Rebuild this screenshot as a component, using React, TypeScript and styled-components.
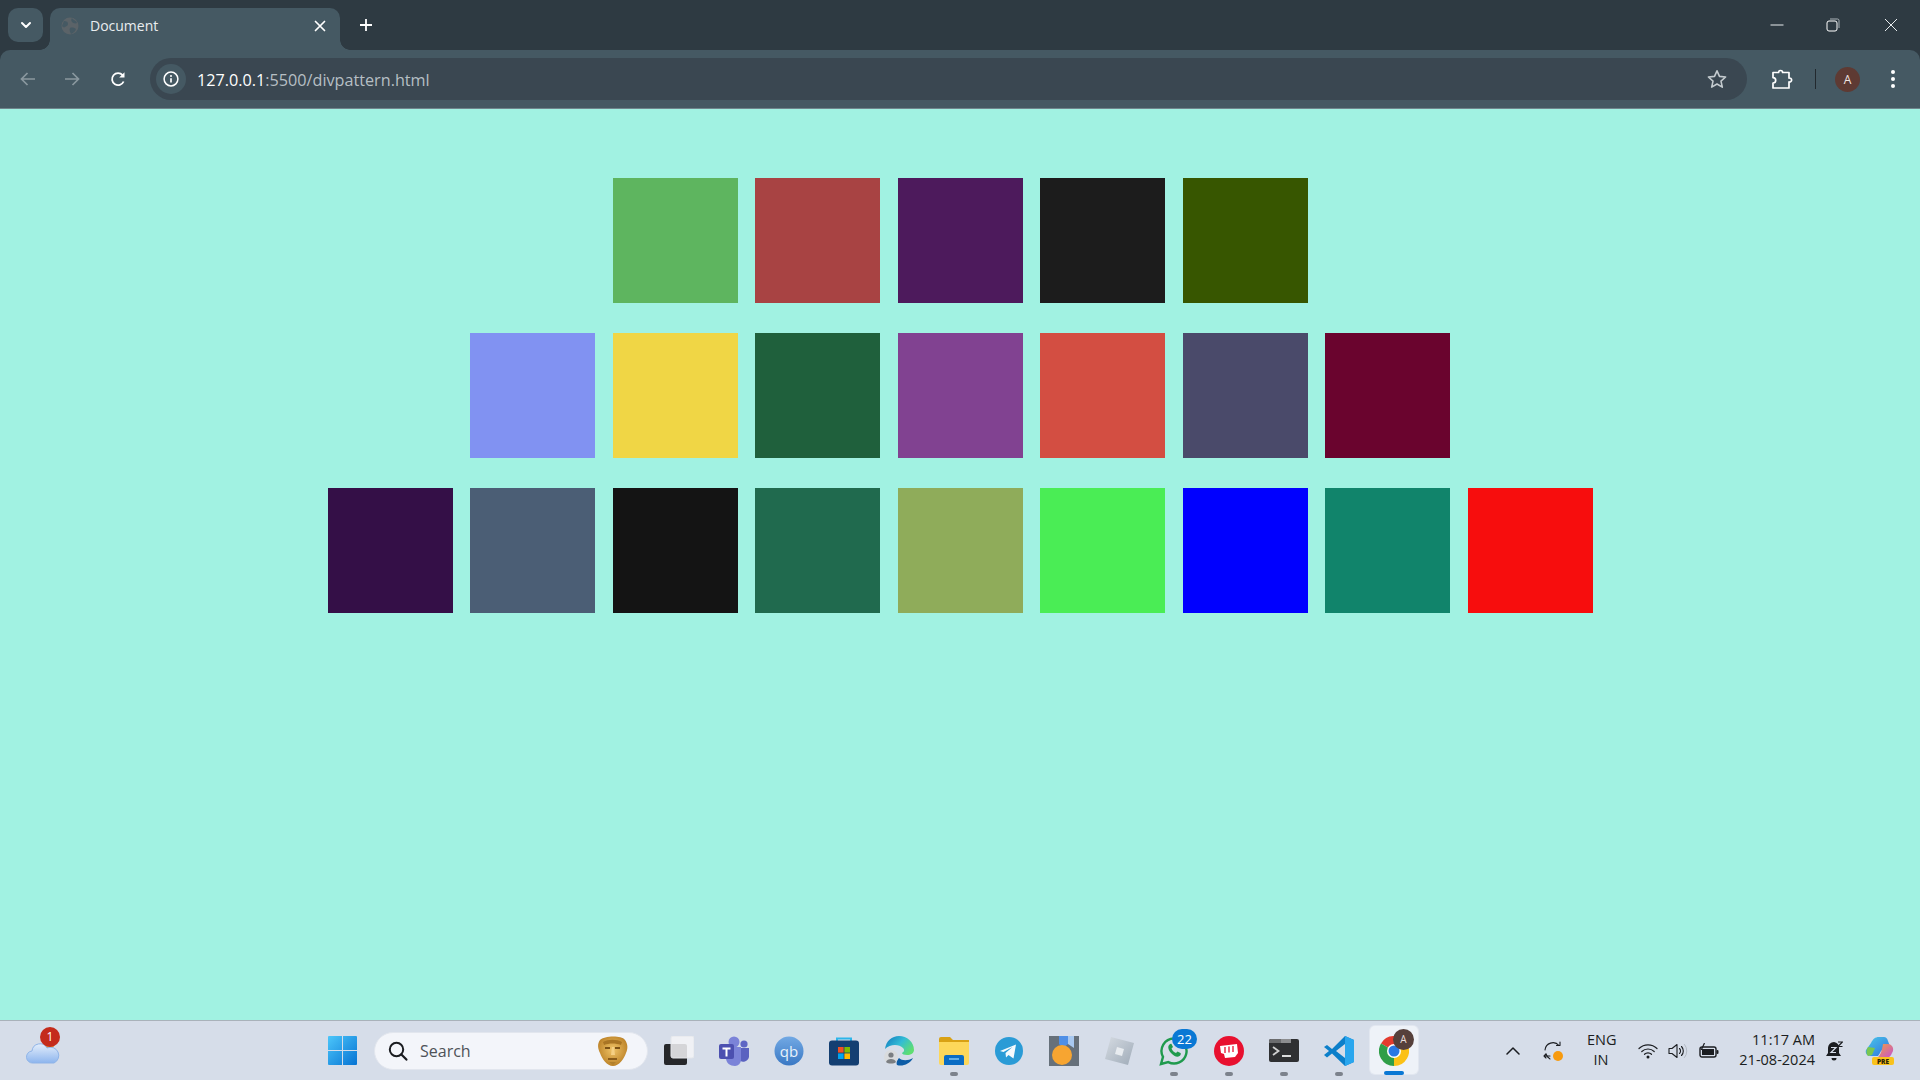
import React from "react";
import styled, { createGlobalStyle } from "styled-components";

const GlobalStyle = createGlobalStyle`
  html, body {
    margin: 0;
    padding: 0;
    height: 100%;
    overflow: hidden;
  }
  * { box-sizing: border-box; }
`;

const Screen = styled.div`
  width: 1920px;
  height: 1080px;
  display: flex;
  flex-direction: column;
  overflow: hidden;
  font-family: "Open Sans", "Noto Sans", sans-serif;
`;

/* browser chrome */
const TabStrip = styled.div`
  height: 50px;
  flex: none;
  display: flex;
  background: #2e3a42;
  padding: 8px 0 0 8px;
`;

const TabSearch = styled.div`
  width: 35px;
  height: 34px;
  border-radius: 10px;
  background: #455963;
  display: flex;
  align-items: center;
  justify-content: center;
`;

const Tab = styled.div`
  position: relative;
  width: 290px;
  height: 42px;
  margin-left: 7px;
  border-radius: 10px 10px 0 0;
  background: #455963;
  display: flex;
  align-items: center;
  padding: 0 14px 6px 11px;
  color: #e9edef;
  font-size: 14px;

  &::before,
  &::after {
    content: "";
    position: absolute;
    bottom: 0;
    width: 10px;
    height: 10px;
  }
  &::before {
    left: -10px;
    background: radial-gradient(circle at 0 0, transparent 9.5px, #455963 10px);
  }
  &::after {
    right: -10px;
    background: radial-gradient(circle at 100% 0, transparent 9.5px, #455963 10px);
  }
`;

const TabTitle = styled.span`
  margin-left: 11px;
  flex: 1;
  line-height: 20px;
`;

const NewTab = styled.div`
  width: 20px;
  height: 34px;
  margin-left: 16px;
  display: flex;
  align-items: center;
  justify-content: center;
`;

const WindowControls = styled.div`
  margin-left: auto;
  display: flex;
  height: 34px;
  align-items: center;
  padding-right: 22px;
`;

const WindowButton = styled.div<{ $gap: number }>`
  margin-left: ${(p) => p.$gap}px;
  display: flex;
`;

const Toolbar = styled.div`
  height: 59px;
  flex: none;
  display: flex;
  align-items: center;
  background: #2e3a42;
`;

const ToolbarInner = styled.div`
  flex: 1;
  height: 59px;
  background: #455963;
  border-radius: 10px 10px 0 0;
  border-bottom: 1px solid #6f858c;
  display: flex;
  align-items: center;
  padding-left: 18px;
`;

const NavButton = styled.div<{ $gap: number }>`
  margin-left: ${(p) => p.$gap}px;
  width: 20px;
  height: 20px;
  display: flex;
`;

const Omnibox = styled.div`
  width: 1597px;
  height: 42px;
  margin-left: 22px;
  border-radius: 21px;
  background: #3a4751;
  display: flex;
  align-items: center;
  padding: 0 20px 0 6px;
`;

const InfoChip = styled.div`
  width: 30px;
  height: 30px;
  border-radius: 50%;
  background: #455963;
  display: flex;
  align-items: center;
  justify-content: center;
`;

const Url = styled.div`
  margin-left: 11px;
  padding-top: 1px;
  flex: 1;
  font-size: 16.2px;
  color: #b6bfc4;
`;

const UrlHost = styled.span`
  color: #ffffff;
`;

const ToolbarIcon = styled.div<{ $gap: number }>`
  margin-left: ${(p) => p.$gap}px;
  display: flex;
`;

const ToolbarDivider = styled.div`
  width: 1px;
  height: 20px;
  margin-left: 22px;
  background: #22292e;
`;

const Avatar = styled.div`
  width: 25px;
  height: 25px;
  margin-left: 19px;
  border-radius: 50%;
  background: #5e3a33;
  color: #f2e6e2;
  font-size: 12px;
  display: flex;
  align-items: center;
  justify-content: center;
`;

/* page content */
const Page = styled.main`
  flex: 1;
  background: #a1f2e2;
  display: flex;
  flex-direction: column;
  align-items: center;
  gap: 30px;
  padding: 69px 0 0 0.5px;
`;

const Row = styled.div`
  display: flex;
  gap: 17.5px;
`;

const Square = styled.div<{ $color: string }>`
  width: 125px;
  height: 125px;
  background: ${(p) => p.$color};
`;

/* windows taskbar */
const Taskbar = styled.footer`
  height: 60px;
  flex: none;
  display: flex;
  align-items: center;
  background: #d6dde9;
  border-top: 1px solid #a9b2ba;
`;

const Weather = styled.div`
  position: relative;
  width: 34px;
  height: 30px;
  margin-left: 26px;
  display: flex;
  align-items: flex-end;
`;

const CountBadge = styled.span<{ $bg: string; $w: number }>`
  position: absolute;
  min-width: ${(p) => p.$w}px;
  height: 20px;
  border-radius: 10px;
  background: ${(p) => p.$bg};
  color: #fff;
  font-size: 12px;
  line-height: 20px;
  text-align: center;
`;

const WeatherBadge = styled(CountBadge)`
  top: -9px;
  left: 14px;
`;

const TaskCenter = styled.div`
  display: flex;
  align-items: center;
  height: 59px;
  margin-left: 255px;
`;

const Slot = styled.div`
  position: relative;
  width: 55px;
  height: 59px;
  flex: none;
  display: flex;
  align-items: center;
  justify-content: center;
`;

const ActiveBox = styled.div`
  position: absolute;
  left: 3.5px;
  top: 5px;
  width: 48px;
  height: 48px;
  border-radius: 5px;
  background: #eef2f8;
  box-shadow: 0 0 0 1px #e2e7f0;
`;

const IconLayer = styled.div`
  position: relative;
  display: flex;
`;

const RunDot = styled.span<{ $active?: boolean }>`
  position: absolute;
  left: 50%;
  bottom: ${(p) => (p.$active ? 5 : 4)}px;
  width: ${(p) => (p.$active ? 20 : 8)}px;
  height: 4px;
  margin-left: ${(p) => (p.$active ? -10 : -4)}px;
  border-radius: 2px;
  background: ${(p) => (p.$active ? "#0a78d4" : "#7c828c")};
`;

const WhatsAppBadge = styled(CountBadge)`
  top: 8px;
  left: 26px;
  background: #0a78d4;
  font-size: 13px;
`;

const ChromeAvatar = styled.span`
  position: absolute;
  top: 8px;
  left: 27px;
  width: 21px;
  height: 21px;
  border-radius: 50%;
  background: #56403b;
  color: #e8dedb;
  font-size: 10px;
  line-height: 21px;
  text-align: center;
`;

const SearchBox = styled.div`
  width: 274px;
  height: 38px;
  margin: 0 3px 0 4px;
  flex: none;
  border-radius: 19px;
  background: #f3f5fa;
  border: 1px solid #e2e6ee;
  display: flex;
  align-items: center;
  padding: 0 19px 0 13px;
`;

const SearchText = styled.span`
  margin-left: 12px;
  flex: 1;
  font-size: 16px;
  color: #4e5258;
`;

const Tray = styled.div`
  margin-left: auto;
  display: flex;
  align-items: center;
  padding-right: 26px;
  color: #1b1d21;
`;

const TrayIcon = styled.div<{ $gap: number }>`
  margin-left: ${(p) => p.$gap}px;
  display: flex;
`;

const Lang = styled.div`
  margin-left: 24px;
  padding-bottom: 2px;
  width: 28px;
  font-size: 14.5px;
  line-height: 20px;
  text-align: center;
`;

const Clock = styled.div`
  margin-left: 20px;
  padding-bottom: 2px;
  width: 76px;
  font-size: 14.5px;
  line-height: 20px;
  text-align: right;
  white-space: nowrap;
`;

const rows = [
  ["#5eb55f", "#a84343", "#4d1a5c", "#1c1c1c", "#375600"],
  ["#8192f2", "#f0d645", "#1f603c", "#814291", "#d34e42", "#4a4a6a", "#6a042e"],
  [
    "#340f47",
    "#4b5e75",
    "#141414",
    "#206a4e",
    "#8fac5a",
    "#4aed55",
    "#0000ff",
    "#11846b",
    "#f70d0d",
  ],
];

const line = { fill: "none", strokeLinecap: "round", strokeLinejoin: "round" } as const;

const Chevron = () => (
  <svg width="14" height="14" viewBox="0 0 14 14">
    <path d="M3 5l4 4 4-4" {...line} stroke="#fff" strokeWidth="2" />
  </svg>
);

const Globe = () => (
  <svg width="18" height="18" viewBox="0 0 18 18">
    <circle cx="9" cy="9" r="8.5" fill="#5b6368" />
    <path d="M3 4c3 0 4 1 4 3s-2 2-3 3-2 0-3-1zM11 1c1 2 4 2 5 5-2 1-4 0-5-1s-1-3 0-4zM9 11c2-1 5 0 6 1-1 3-3 4-5 5-1-2-2-4-1-6z" fill="#455963" />
  </svg>
);

const Close = () => (
  <svg width="12" height="12" viewBox="0 0 12 12">
    <path d="M1.5 1.5l9 9M10.5 1.5l-9 9" {...line} stroke="#fff" strokeWidth="1.7" />
  </svg>
);

const Plus = () => (
  <svg width="14" height="14" viewBox="0 0 14 14">
    <path d="M7 1v12M1 7h12" stroke="#fff" strokeWidth="1.8" fill="none" />
  </svg>
);

const Minimize = () => (
  <svg width="14" height="14" viewBox="0 0 14 14">
    <path d="M0.5 7h13" stroke="#e8ecee" strokeWidth="1" />
  </svg>
);

const Restore = () => (
  <svg width="14" height="14" viewBox="0 0 14 14">
    <rect x="1" y="3" width="10" height="10" rx="2" fill="none" stroke="#fff" strokeWidth="1" />
    <path d="M4 1h7.5a1.5 1.5 0 0 1 1.5 1.5V10" fill="none" stroke="#aab3b8" strokeWidth="1" />
  </svg>
);

const WinClose = () => (
  <svg width="14" height="14" viewBox="0 0 14 14">
    <path d="M1 1l12 12M13 1L1 13" stroke="#e8ecee" strokeWidth="1" />
  </svg>
);

const Arrow = ({ flip }: { flip?: boolean }) => (
  <svg width="20" height="20" viewBox="0 0 20 20">
    <path
      d={flip ? "M3 10h13M10.5 4l6 6-6 6" : "M17 10H4M9.5 4l-6 6 6 6"}
      fill="none"
      stroke="#8a989f"
      strokeWidth="1.7"
    />
  </svg>
);

const Reload = () => (
  <svg width="20" height="20" viewBox="0 0 20 20">
    <path d="M15.6 12.5A6 6 0 1 1 14.6 6.2" fill="none" stroke="#fff" strokeWidth="1.8" />
    <path d="M16.5 3.2v5.3h-5.3z" fill="#fff" />
  </svg>
);

const Info = () => (
  <svg width="16" height="16" viewBox="0 0 16 16">
    <circle cx="8" cy="8" r="6.9" fill="none" stroke="#fff" strokeWidth="1.5" />
    <path d="M8 7.2v4.3" stroke="#fff" strokeWidth="1.7" />
    <circle cx="8" cy="4.9" r="1" fill="#fff" />
  </svg>
);

const Star = () => (
  <svg width="20" height="20" viewBox="0 0 20 20">
    <path
      d="M10 1.8l2.5 5.6 6.1.6-4.6 4.1 1.3 6L10 15l-5.3 3.1 1.3-6L1.4 8l6.1-.6z"
      fill="none"
      stroke="#c4cbcf"
      strokeWidth="1.6"
      strokeLinejoin="round"
    />
  </svg>
);

const Puzzle = () => (
  <svg width="22" height="22" viewBox="0 0 22 22">
    <path
      d="M2 4.5h5.6a2 2 0 1 1 4 0H18v5.6a2 2 0 1 1 0 3.8V20H2v-5a2.6 2.6 0 0 0 0-5.400z"
      fill="none"
      stroke="#fff"
      strokeWidth="1.7"
      strokeLinejoin="round"
    />
  </svg>
);

const Dots = () => (
  <svg width="6" height="20" viewBox="0 0 6 20">
    <circle cx="3" cy="3" r="2" fill="#fff" />
    <circle cx="3" cy="10" r="2" fill="#fff" />
    <circle cx="3" cy="17" r="2" fill="#fff" />
  </svg>
);

const Cloud = () => (
  <svg width="34" height="30" viewBox="0 0 34 30">
    <defs>
      <linearGradient id="cl" x1="0" y1="0" x2="0" y2="1">
        <stop offset="0" stopColor="#e4eefb" />
        <stop offset="1" stopColor="#8db5ee" />
      </linearGradient>
    </defs>
    <circle cx="23" cy="9" r="5" fill="#f08a24" />
    <path
      d="M7 27a6 6 0 0 1-1-12 8 8 0 0 1 15-3 7.500 7.500 0 0 1 7 15z"
      fill="url(#cl)"
      stroke="#8fb4e8"
      strokeWidth="1"
    />
  </svg>
);

const StartLogo = () => (
  <svg width="29" height="29" viewBox="0 0 29 29">
    <defs>
      <linearGradient id="win" x1="0" y1="0" x2="1" y2="1">
        <stop offset="0" stopColor="#4cc6fa" />
        <stop offset="1" stopColor="#0673d3" />
      </linearGradient>
    </defs>
    <path d="M1 0h13v14H0V1a1 1 0 0 1 1-1zM15 0h13a1 1 0 0 1 1 1v13H15zM0 15h14v14H1a1 1 0 0 1-1-1zM15 15h14v13a1 1 0 0 1-1 1H15z" fill="url(#win)" />
  </svg>
);

const SearchGlass = () => (
  <svg width="20" height="20" viewBox="0 0 20 20">
    <circle cx="8.5" cy="8.5" r="6.7" fill="none" stroke="#1a1c20" strokeWidth="2" />
    <path d="M13.4 13.4l5 5.2" stroke="#1a1c20" strokeWidth="2.2" strokeLinecap="round" />
  </svg>
);

const GoldMask = () => (
  <svg width="31" height="32" viewBox="0 0 31 32">
    <defs>
      <radialGradient id="gold" cx="0.5" cy="0.45" r="0.6">
        <stop offset="0" stopColor="#f0c468" />
        <stop offset="1" stopColor="#b77c22" />
      </radialGradient>
    </defs>
    <path d="M3 5c4-4 21-5 25 0 3 4 3 9 1 13-2 6-7 13-13 13S5 24 3 18C1 14 0 9 3 5z" fill="url(#gold)" />
    <path d="M6 7c5-3 14-3 19 0l-1 3c-5-2-12-2-17 0z" fill="#a97524" />
    <path d="M8 12h5v2H8zM18 12h5v2h-5z" fill="#7c5216" />
    <path d="M15 12h2l1 8h-4z" fill="#f5d084" />
    <path d="M11 23h9v2h-9z" fill="#8a5c1a" />
    <path d="M12 27h7l-3 3z" fill="#b07f2c" />
  </svg>
);

const TaskView = () => (
  <svg width="30" height="29" viewBox="0 0 30 29">
    <rect x="0" y="8" width="23" height="21" rx="2" fill="#26272a" />
    <rect x="7" y="0" width="23" height="22" rx="2" fill="#f4f5f7" fillOpacity="0.85" stroke="#e4e6ea" />
  </svg>
);

const Teams = () => (
  <svg width="30" height="30" viewBox="0 0 30 30">
    <circle cx="15" cy="6" r="5.500" fill="#7b83d8" />
    <circle cx="25" cy="8" r="3.600" fill="#5e66c4" />
    <path d="M20 12h10v9a6 6 0 0 1-10 3z" fill="#5a62c0" />
    <path d="M7 11h15v13a6 6 0 0 1-6 6c-5 0-9-3-9-8z" fill="#7b83d8" />
    <rect x="0" y="8" width="15" height="15" rx="2" fill="#4c50b0" />
    <path d="M3.500 11.500h8v2h-3v7h-2v-7h-3z" fill="#fff" />
  </svg>
);

const QBittorrent = () => (
  <svg width="30" height="30" viewBox="0 0 30 30">
    <defs>
      <linearGradient id="qb" x1="0" y1="0" x2="0" y2="1">
        <stop offset="0" stopColor="#72a9e4" />
        <stop offset="1" stopColor="#3a78c4" />
      </linearGradient>
    </defs>
    <circle cx="15" cy="15" r="14.500" fill="url(#qb)" />
    <text x="15" y="20.500" textAnchor="middle" fontFamily="Open Sans, sans-serif" fontSize="15" fill="#e8f2fc">
      qb
    </text>
  </svg>
);

const Store = () => (
  <svg width="30" height="30" viewBox="0 0 30 30">
    <path d="M8 6V2.500h14V6" fill="none" stroke="#2cb5ea" strokeWidth="2" />
    <rect x="0" y="4.500" width="30" height="25" rx="3" fill="#143f72" />
    <rect x="9" y="11" width="5.600" height="5.600" fill="#f25022" />
    <rect x="15.400" y="11" width="5.600" height="5.600" fill="#7fba00" />
    <rect x="9" y="17.400" width="5.600" height="5.600" fill="#00a4ef" />
    <rect x="15.400" y="17.400" width="5.600" height="5.600" fill="#ffb900" />
  </svg>
);

const Edge = () => (
  <svg width="30" height="30" viewBox="0 0 30 30">
    <defs>
      <linearGradient id="edge" x1="0" y1="0" x2="1" y2="0.6">
        <stop offset="0" stopColor="#0f76bd" />
        <stop offset="0.55" stopColor="#32bcd6" />
        <stop offset="1" stopColor="#5fde72" />
      </linearGradient>
    </defs>
    <path d="M1 13C2 5 8 0 15 0c8 0 15 6 15 14 0 3-3 5-7 5-3 0-5-1-5-2 2-1 3-3 1-5-4-4-13-4-18 1z" fill="url(#edge)" />
    <path d="M13 29c5 2 13-1 16-7-5 3-11 3-14 0-2 2-3 5-2 7z" fill="#0d5ca6" />
    <circle cx="7" cy="21" r="7" fill="#d9dbdd" />
    <circle cx="7" cy="19" r="2.600" fill="#7b7e82" />
    <path d="M2 26c1-4 9-4 10 0-2 2-8 2-10 0z" fill="#7b7e82" />
  </svg>
);

const Folder = () => (
  <svg width="30" height="30" viewBox="0 0 30 30">
    <path d="M0 3a2 2 0 0 1 2-2h9l3 3h16v6H0z" fill="#d9a114" />
    <path d="M0 6h30v21a2 2 0 0 1-2 2H2a2 2 0 0 1-2-2z" fill="#fdd75a" />
    <path d="M5 21a2 2 0 0 1 2-2h16a2 2 0 0 1 2 2v8H5z" fill="#0a6cc4" />
    <path d="M10 23h10" stroke="#7fc4f5" strokeWidth="1.500" />
  </svg>
);

const Telegram = () => (
  <svg width="28" height="28" viewBox="0 0 28 28">
    <circle cx="14" cy="14" r="14" fill="#2a9bd6" />
    <path d="M5 14l16-6.500-2.500 14-5-3.500-2.500 2.500-.5-4.500 7-6-9 5z" fill="#f4fafd" />
  </svg>
);

const PaintApp = () => (
  <svg width="30" height="30" viewBox="0 0 30 30">
    <path d="M0 0h30v30H0z" fill="#66707a" />
    <path d="M10 0h9v8l-5 4-4-4z" fill="#4f8fe6" />
    <path d="M19 0h6v12l-6-4z" fill="#a8c8f0" />
    <circle cx="13" cy="19" r="10" fill="#f7a531" />
  </svg>
);

const Roblox = () => (
  <svg width="30" height="30" viewBox="0 0 30 30">
    <defs>
      <linearGradient id="rb" x1="0" y1="0" x2="1" y2="1">
        <stop offset="0" stopColor="#d5dbe2" />
        <stop offset="1" stopColor="#9fabb8" />
      </linearGradient>
    </defs>
    <path d="M7 1l23 6-6 22-23-6z" fill="url(#rb)" />
    <path d="M13 11l7 2-2 7-7-2z" fill="#e8ecf0" />
  </svg>
);

const WhatsApp = () => (
  <svg width="30" height="30" viewBox="0 0 30 30">
    <path
      d="M15 2.500a12.500 12.500 0 0 0-11 18.400L2 28l7.300-1.900A12.500 12.500 0 1 0 15 2.500z"
      fill="none"
      stroke="#1f9a4d"
      strokeWidth="2.400"
    />
    <path
      d="M10.500 8.500c-2 1.500-1.500 5 1.500 8.500s6.500 4.500 8.500 3c1.500-1 1.500-2.500 1-3l-3-1.500-1.500 1.500c-2-.5-4-3-4.500-4.500l1.500-1.500-1.500-3c-.5-.5-1-.5-2 .5z"
      fill="#1f9a4d"
    />
  </svg>
);

const Riot = () => (
  <svg width="30" height="30" viewBox="0 0 30 30">
    <circle cx="15" cy="15" r="15" fill="#e8102f" />
    <path d="M6 10l17-2 1 9-3 4-10 1-1-4-3-1z" fill="#fff" />
    <path d="M11 11v6M15 10.500v6M19 10v6" stroke="#e8102f" strokeWidth="1.300" />
  </svg>
);

const Terminal = () => (
  <svg width="30" height="23" viewBox="0 0 30 23">
    <rect width="30" height="23" rx="2" fill="#2f3032" />
    <path d="M0 2a2 2 0 0 1 2-2h10v4H0z" fill="#6b6c6e" />
    <path d="M12 0h10v4H12z" fill="#8c8d8f" />
    <path d="M4 8l5.500 4L4 16" fill="none" stroke="#d0d0d0" strokeWidth="1.800" />
    <path d="M13 17h9" stroke="#f0f0f0" strokeWidth="1.800" />
  </svg>
);

const VSCode = () => (
  <svg width="30" height="30" viewBox="0 0 30 30">
    <path d="M21 0l9 4v22l-9 4-13-12.500-5 4L0 19l5-4-5-4 3-2 5 4z" fill="#0c7fca" />
    <path d="M21 0l9 4v22l-9 4z" fill="#29a6ee" />
    <path d="M21 8v14l-9-7z" fill="#d6dde9" />
  </svg>
);

const Chrome = () => (
  <svg width="30" height="30" viewBox="0 0 30 30">
    <path d="M15 15L2 7.500A15 15 0 0 1 28 7.500z" fill="#e33b2e" />
    <path d="M15 15L2 7.500A15 15 0 0 0 15 30z" fill="#2f9e48" />
    <path d="M15 15l13-7.500A15 15 0 0 1 15 30z" fill="#fbc116" />
    <circle cx="15" cy="15" r="7" fill="#fff" />
    <circle cx="15" cy="15" r="5.500" fill="#2a78e4" />
  </svg>
);

const TrayChevron = () => (
  <svg width="14" height="14" viewBox="0 0 14 14">
    <path d="M1 10l6-6 6 6" {...line} stroke="#1b1d21" strokeWidth="1.500" />
  </svg>
);

const SyncIcon = () => (
  <svg width="20" height="20" viewBox="0 0 20 20">
    <path d="M2 9a8 8 0 0 1 14-4.500M17 4V1M17 4.500h-3.500M3 13a8 8 0 0 0 4 5" {...line} stroke="#1b1d21" strokeWidth="1.100" />
    <path d="M1 15h6M1 15l2-2M1 15l2 2" {...line} stroke="#1b1d21" strokeWidth="1.100" />
    <circle cx="15" cy="15" r="5" fill="#f79a0e" />
  </svg>
);

const Wifi = () => (
  <svg width="20" height="16" viewBox="0 0 20 16">
    <path d="M1 5.500a13 13 0 0 1 18 0M3.800 8.500a9 9 0 0 1 12.400 0M6.500 11.300a5 5 0 0 1 7 0" {...line} stroke="#1b1d21" strokeWidth="1.200" />
    <circle cx="10" cy="14" r="1.500" fill="#1b1d21" />
  </svg>
);

const Speaker = () => (
  <svg width="20" height="16" viewBox="0 0 20 16">
    <path d="M1 5.500h3L9 1.500v13l-5-4H1z" {...line} stroke="#1b1d21" strokeWidth="1.100" />
    <path d="M11.500 5.500a3.500 3.500 0 0 1 0 5M13.500 3.500a6.500 6.500 0 0 1 0 9" {...line} stroke="#1b1d21" strokeWidth="1.100" />
    <path d="M16.500 1.500a10 10 0 0 1 0 13" {...line} stroke="#b4bac4" strokeWidth="1" />
  </svg>
);

const Battery = () => (
  <svg width="20" height="16" viewBox="0 0 20 16">
    <rect x="1" y="4" width="16" height="10" rx="2" fill="none" stroke="#1b1d21" strokeWidth="1.400" />
    <rect x="3" y="6" width="12" height="6" fill="#1b1d21" />
    <rect x="17.500" y="7" width="2" height="4" rx="1" fill="#1b1d21" />
    <path d="M5.500 0L2.500 6.500h3L3.500 11" fill="none" stroke="#1b1d21" strokeWidth="1.200" />
  </svg>
);

const BellSnooze = () => (
  <svg width="17" height="20" viewBox="0 0 17 20">
    <path d="M8 1a6 6 0 0 0-6 6v5l-2 3h15l-2-3V7a6 6 0 0 0-5-6z" fill="#1b1d21" />
    <path d="M5.500 17h5a2.500 2.500 0 0 1-5 0z" fill="#1b1d21" />
    <path d="M5 6.500h5l-5 5h5" fill="none" stroke="#d6dde9" strokeWidth="1.200" />
    <path d="M12 1h4.500L12 5.500h4.500" fill="none" stroke="#1b1d21" strokeWidth="1.200" />
  </svg>
);

const Copilot = () => (
  <svg width="29" height="28" viewBox="0 0 29 28">
    <defs>
      <linearGradient id="cpa" x1="0" y1="0" x2="1" y2="1">
        <stop offset="0" stopColor="#4ac9e8" />
        <stop offset="1" stopColor="#2f6fe0" />
      </linearGradient>
      <linearGradient id="cpb" x1="0" y1="0" x2="1" y2="1">
        <stop offset="0" stopColor="#f2a03c" />
        <stop offset="1" stopColor="#c34fd8" />
      </linearGradient>
    </defs>
    <path d="M6 6c2-4 4-6 8-6h5c2 0 3 1 4 4l3 8c-6-1-10 0-11 4l-2 3H6c-4 0-6-3-5-6z" fill="url(#cpa)" />
    <path d="M3 10l7 1-3 7-4 1c-2-2-2-6 0-9z" fill="#7ac74f" />
    <path d="M18 7h5c3 0 6 3 5 7l-2 4c-1 2-3 3-5 3h-9c3-2 5-7 6-14z" fill="url(#cpb)" />
    <rect x="7" y="20" width="22" height="8" rx="2" fill="#f9c21c" />
    <text x="18" y="26.500" textAnchor="middle" fontFamily="Open Sans, sans-serif" fontWeight="800" fontSize="6.500" fill="#2a2205">
      PRE
    </text>
  </svg>
);

const apps = [
  { icon: <TaskView /> },
  { icon: <Teams /> },
  { icon: <QBittorrent /> },
  { icon: <Store /> },
  { icon: <Edge /> },
  { icon: <Folder />, running: true },
  { icon: <Telegram /> },
  { icon: <PaintApp /> },
  { icon: <Roblox /> },
];

export default function App() {
  return (
    <>
      <GlobalStyle />
      <Screen>
        <TabStrip>
          <TabSearch>
            <Chevron />
          </TabSearch>
          <Tab>
            <Globe />
            <TabTitle>Document</TabTitle>
            <Close />
          </Tab>
          <NewTab>
            <Plus />
          </NewTab>
          <WindowControls>
            <WindowButton $gap={0}>
              <Minimize />
            </WindowButton>
            <WindowButton $gap={42}>
              <Restore />
            </WindowButton>
            <WindowButton $gap={44}>
              <WinClose />
            </WindowButton>
          </WindowControls>
        </TabStrip>

        <Toolbar>
          <ToolbarInner>
            <NavButton $gap={0}>
              <Arrow />
            </NavButton>
            <NavButton $gap={24}>
              <Arrow flip />
            </NavButton>
            <NavButton $gap={26}>
              <Reload />
            </NavButton>
            <Omnibox>
              <InfoChip>
                <Info />
              </InfoChip>
              <Url>
                <UrlHost>127.0.0.1</UrlHost>:5500/divpattern.html
              </Url>
              <Star />
            </Omnibox>
            <ToolbarIcon $gap={24}>
              <Puzzle />
            </ToolbarIcon>
            <ToolbarDivider />
            <Avatar>A</Avatar>
            <ToolbarIcon $gap={30}>
              <Dots />
            </ToolbarIcon>
          </ToolbarInner>
        </Toolbar>

        <Page>
          {rows.map((row, i) => (
            <Row key={i}>
              {row.map((color, j) => (
                <Square key={j} $color={color} />
              ))}
            </Row>
          ))}
        </Page>

        <Taskbar>
          <Weather>
            <Cloud />
            <WeatherBadge $bg="#c42b1c" $w={20}>
              1
            </WeatherBadge>
          </Weather>

          <TaskCenter>
            <Slot>
              <StartLogo />
            </Slot>
            <SearchBox>
              <SearchGlass />
              <SearchText>Search</SearchText>
              <GoldMask />
            </SearchBox>
            {apps.map((app, i) => (
              <Slot key={i}>
                {app.icon}
                {app.running && <RunDot />}
              </Slot>
            ))}
            <Slot>
              <WhatsApp />
              <WhatsAppBadge $bg="#0a78d4" $w={25}>
                22
              </WhatsAppBadge>
              <RunDot />
            </Slot>
            <Slot>
              <Riot />
              <RunDot />
            </Slot>
            <Slot>
              <Terminal />
              <RunDot />
            </Slot>
            <Slot>
              <VSCode />
              <RunDot />
            </Slot>
            <Slot>
              <ActiveBox />
              <IconLayer>
                <Chrome />
              </IconLayer>
              <ChromeAvatar>A</ChromeAvatar>
              <RunDot $active />
            </Slot>
          </TaskCenter>

          <Tray>
            <TrayIcon $gap={0}>
              <TrayChevron />
            </TrayIcon>
            <TrayIcon $gap={23}>
              <SyncIcon />
            </TrayIcon>
            <Lang>
              ENG
              <br />
              IN
            </Lang>
            <TrayIcon $gap={23}>
              <Wifi />
            </TrayIcon>
            <TrayIcon $gap={10}>
              <Speaker />
            </TrayIcon>
            <TrayIcon $gap={11}>
              <Battery />
            </TrayIcon>
            <Clock>
              11:17 AM
              <br />
              21-08-2024
            </Clock>
            <TrayIcon $gap={11}>
              <BellSnooze />
            </TrayIcon>
            <TrayIcon $gap={22}>
              <Copilot />
            </TrayIcon>
          </Tray>
        </Taskbar>
      </Screen>
    </>
  );
}
